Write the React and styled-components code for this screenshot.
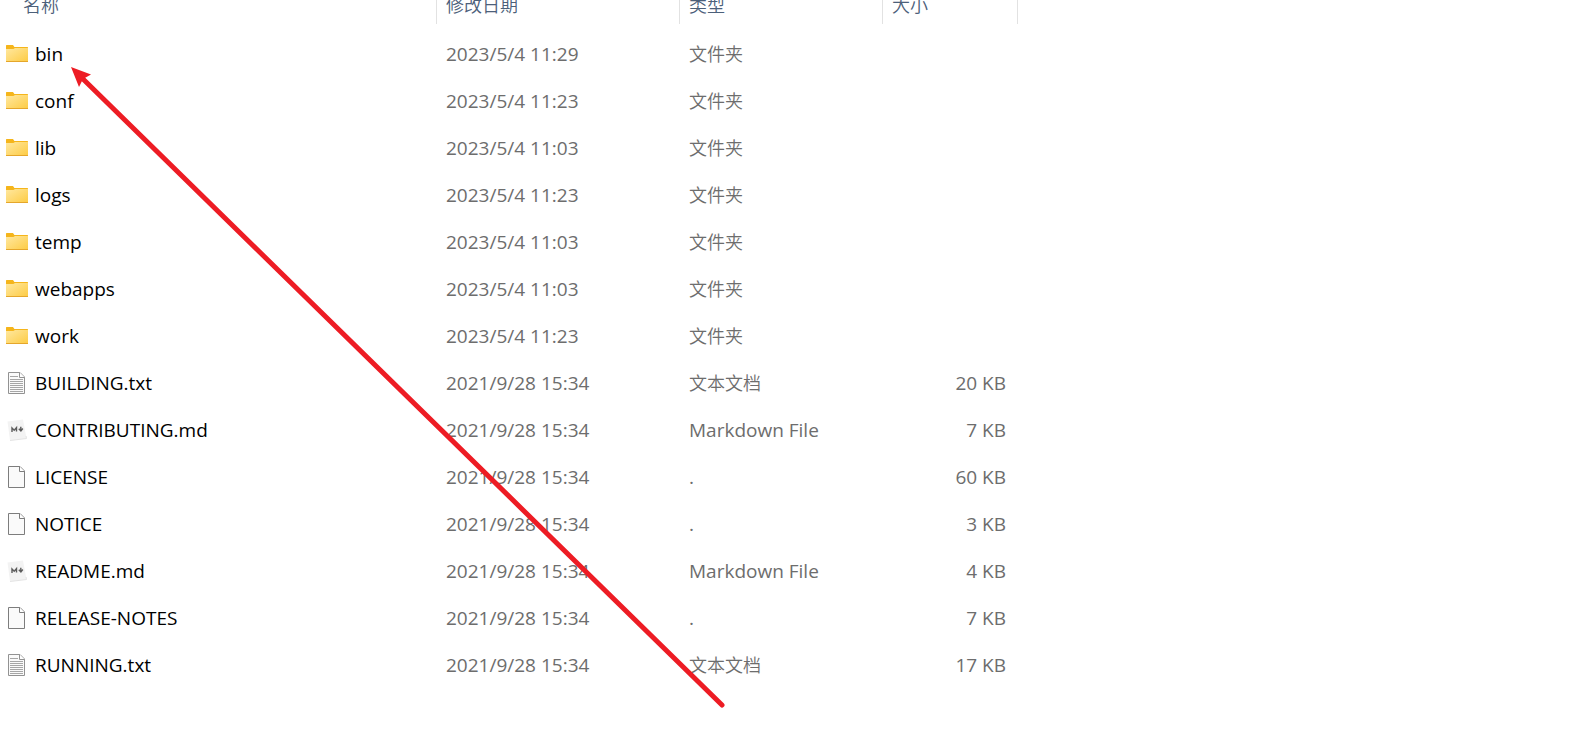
import React from 'react';
import styled, { createGlobalStyle } from 'styled-components';

const GlobalStyle = createGlobalStyle`
  body {
    margin: 0;
    background: #fff;
    font-family: 'Open Sans', 'Noto Sans CJK SC', sans-serif;
    font-size: 19px;
  }
`;

const XExplorer = styled.main`
  position: relative;
  min-height: 100vh;
  overflow: hidden;
`;

const XTable = styled.table`
  width: 100%;
  table-layout: fixed;
  border-collapse: separate;
  border-spacing: 0;

  tbody::before {
    content: '';
    display: block;
    height: 6px;
  }
`;

const XCol = styled.col`
  width: ${props => props.$width};
`;

const XHeadCell = styled.th`
  box-sizing: border-box;
  height: 24px;
  padding: 0 0 16px ${props => (props.$first ? '23px' : '9px')};
  border-right: 1px solid #e2e2e2;
  color: #4c607a;
  font-family: 'Noto Sans CJK SC', sans-serif;
  font-size: 18px;
  font-weight: 350;
  line-height: 8px;
  text-align: left;
  white-space: nowrap;
`;

const XCell = styled.td`
  box-sizing: border-box;
  height: 47px;
  padding: 0 12px 0 9px;
  color: #6d6d6d;
  line-height: 24px;
  text-align: ${props => (props.$right ? 'right' : 'left')};
  white-space: nowrap;
`;

const XHan = styled.span`
  font-family: 'Noto Sans CJK SC', sans-serif;
  font-size: 18px;
  font-weight: 350;
`;

const XName = styled.div`
  display: flex;
  align-items: center;
  gap: 7px;
  padding-left: 6px;
  color: #000;
`;

const XNameCell = styled(XCell)`
  padding: 0;
`;

const XIcon = styled.svg`
  display: block;
  flex: none;
  width: 22px;
  height: 24px;
`;

const XArrow = styled.svg`
  position: absolute;
  top: 0;
  left: 0;
  width: 730px;
  height: 715px;
  pointer-events: none;
`;

const FolderIcon = () => (
  <XIcon viewBox='0 0 22 24' aria-hidden='true'>
    <defs>
      <linearGradient id='folder' x1='0' y1='0' x2='1' y2='1'>
        <stop offset='0' stopColor='#ffe8a0' />
        <stop offset='1' stopColor='#fdcb43' />
      </linearGradient>
    </defs>
    <path d='M0 3.6Q0 3 .6 3H7L8.4 5H21.4Q22 5 22 5.6V8H0z' fill='#f5b51b' />
    <path d='M0 7H7.4L9 6H22V19.4Q22 20 21.4 20H.6Q0 20 0 19.4z' fill='url(#folder)' />
    <path d='M0 19H22V19.4Q22 20 21.4 20H.6Q0 20 0 19.4z' fill='#e5a62b' />
  </XIcon>
);

const FileIcon = ({ lines }) => (
  <XIcon viewBox='0 0 22 24' aria-hidden='true'>
    <path d='M2.5 1.5H14L18.5 6V22.5H2.5z' fill='#fafafa' stroke={lines ? '#929292' : '#7d7d7d'} />
    <path d='M13.5 1.5V6.5H18.5' fill='#fff' stroke={lines ? '#929292' : '#7d7d7d'} />
    {lines && (
      <path
        d='M4 5.5H12M4 8.5H17M4 10.5H17M4 12.5H17M4 14.5H17M4 16.5H17M4 18.5H17M4 20.5H17'
        stroke='#a6a6a6'
      />
    )}
  </XIcon>
);

const MarkdownIcon = () => (
  <XIcon viewBox='0 0 22 24' aria-hidden='true'>
    <path d='M1.5 3.5L17 1.5L20.5 20.5L4 22.5z' fill='#f3f3f3' />
    <path d='M4 22.5L20.5 20.5L20 18' fill='none' stroke='#e4e4e4' />
    <path d='M6 14V10L8.2 12.2L10.5 9.6V13.6' fill='none' stroke='#5c5c5c' strokeWidth='1.4' />
    <path d='M14.8 8.8V12.5M12.8 10.8L14.9 13L16.8 10.5' fill='none' stroke='#5c5c5c' strokeWidth='1.4' />
  </XIcon>
);

const files = [
  { name: 'bin', date: '2023/5/4 11:29', kind: 'folder' },
  { name: 'conf', date: '2023/5/4 11:23', kind: 'folder' },
  { name: 'lib', date: '2023/5/4 11:03', kind: 'folder' },
  { name: 'logs', date: '2023/5/4 11:23', kind: 'folder' },
  { name: 'temp', date: '2023/5/4 11:03', kind: 'folder' },
  { name: 'webapps', date: '2023/5/4 11:03', kind: 'folder' },
  { name: 'work', date: '2023/5/4 11:23', kind: 'folder' },
  { name: 'BUILDING.txt', date: '2021/9/28 15:34', kind: 'text', size: '20 KB' },
  { name: 'CONTRIBUTING.md', date: '2021/9/28 15:34', kind: 'markdown', size: '7 KB' },
  { name: 'LICENSE', date: '2021/9/28 15:34', kind: 'file', size: '60 KB' },
  { name: 'NOTICE', date: '2021/9/28 15:34', kind: 'file', size: '3 KB' },
  { name: 'README.md', date: '2021/9/28 15:34', kind: 'markdown', size: '4 KB' },
  { name: 'RELEASE-NOTES', date: '2021/9/28 15:34', kind: 'file', size: '7 KB' },
  { name: 'RUNNING.txt', date: '2021/9/28 15:34', kind: 'text', size: '17 KB' },
];

const kinds = {
  folder: { icon: <FolderIcon />, label: <XHan>文件夹</XHan> },
  text: { icon: <FileIcon lines />, label: <XHan>文本文档</XHan> },
  markdown: { icon: <MarkdownIcon />, label: 'Markdown File' },
  file: { icon: <FileIcon />, label: '.' },
};

const App = () => {
  return (
    <XExplorer>
      <GlobalStyle />

      <XTable>
        <colgroup>
          <XCol $width='437px' />
          <XCol $width='243px' />
          <XCol $width='203px' />
          <XCol $width='135px' />
          <XCol $width='auto' />
        </colgroup>
        <thead>
          <tr>
            <XHeadCell scope='col' $first>名称</XHeadCell>
            <XHeadCell scope='col'>修改日期</XHeadCell>
            <XHeadCell scope='col'>类型</XHeadCell>
            <XHeadCell scope='col'>大小</XHeadCell>
            <td />
          </tr>
        </thead>
        <tbody>
          {files.map(file => (
            <tr key={file.name}>
              <XNameCell>
                <XName>
                  {kinds[file.kind].icon}
                  <span>{file.name}</span>
                </XName>
              </XNameCell>
              <XCell>{file.date}</XCell>
              <XCell>{kinds[file.kind].label}</XCell>
              <XCell $right>{file.size}</XCell>
              <td />
            </tr>
          ))}
        </tbody>
      </XTable>

      {/* hand-drawn pointer to the bin folder */}
      <XArrow viewBox='0 0 730 715' aria-hidden='true'>
        <path d='M82 78L722 705' stroke='#ed1c24' strokeWidth='5' strokeLinecap='round' />
        <path d='M71 67L91 74.5L83 79L79 87z' fill='#ed1c24' />
      </XArrow>
    </XExplorer>
  );
}

export default App;
